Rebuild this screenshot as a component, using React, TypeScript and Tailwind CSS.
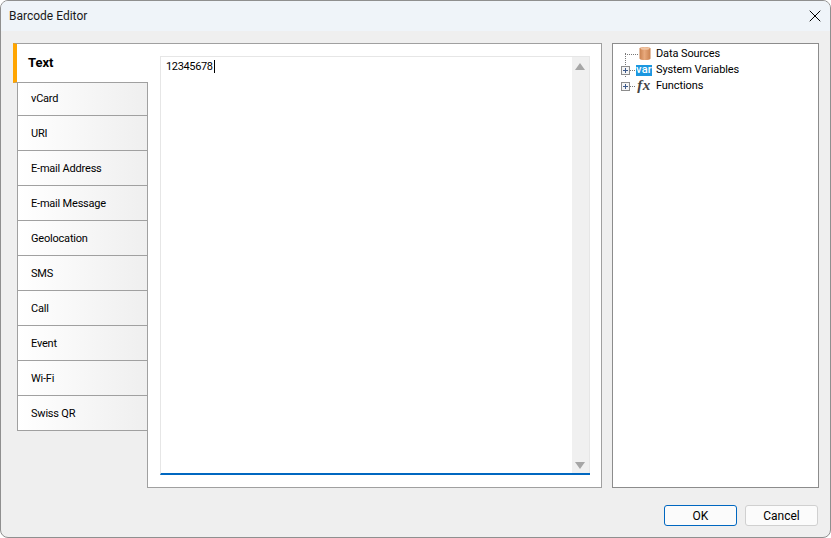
import { X } from "lucide-react";

const tabs = ["vCard", "URI", "E-mail Address", "E-mail Message", "Geolocation", "SMS", "Call", "Event", "Wi-Fi", "Swiss QR"];

function Plus() {
  return (
    <span className="flex h-[9px] w-[9px] shrink-0 items-center justify-center border border-[#8c8c8c] bg-[#f4f4f4]">
      <svg width="7" height="7" viewBox="0 0 7 7">
        <path d="M1 3.5H6M3.5 1V6" stroke="#3d5a8a" strokeWidth="1" />
      </svg>
    </span>
  );
}

export default function App() {
  return (
    <div className="flex h-[538px] w-[831px] flex-col overflow-hidden rounded-lg border border-[#8f8f8f] bg-[#efefef] text-[11px] text-black [font-family:Roboto,'Liberation_Sans',sans-serif]">
      {/* Title bar */}
      <div className="flex h-[30px] shrink-0 items-center justify-between bg-[#eff4f9] pl-[8px] pr-[5px] text-[12px]">
        <span className="text-[#1a1a1a]">Barcode Editor</span>
        <X size={20} strokeWidth={1.2} />
      </div>

      {/* Body */}
      <div className="mt-[12px] ml-[12px] flex h-[445px] w-[806px]">
        <div className="relative z-10 -mr-[1px] flex w-[135px] shrink-0 flex-col">
          <div className="flex h-[40px] items-center border-y border-l-[4px] border-[#a0a0a0] border-l-[#ffa500] bg-white pl-[11px] text-[13px] font-bold">
            Text
          </div>
          {tabs.map((t, i) => (
            <div
              key={t}
              className={`ml-[4px] mr-[1px] flex items-center border-b border-l border-[#a0a0a0] bg-gradient-to-r from-white to-[#efefef] pl-[13px] tracking-[-0.2px] ${i === 0 ? "h-[33px]" : "h-[35px] pt-[2px]"}`}
            >
              {t}
            </div>
          ))}
        </div>

        {/* Editor panel */}
        <div className="h-full w-[455px] shrink-0 border border-[#a0a0a0] bg-white pt-[12px] pl-[12px] pr-[11px] pb-[12px]">
          <div className="flex h-full border-b-2 border-l border-t border-[#e6e6e6] border-b-[#0067c0]">
            <div className="flex-1 pl-[5px] pt-[1px] leading-[17px] tracking-[-0.35px]">
              <span className="border-r border-black pr-[1px]">12345678</span>
            </div>
            <div className="flex w-[18px] shrink-0 flex-col items-center justify-between border-r border-[#e6e6e6] bg-[#f0f0f0] pt-[6px] pb-[4px] pr-[1px]">
              <span className="h-0 w-0 border-x-[5px] border-b-[7px] border-x-transparent border-b-[#a6a6a6]" />
              <span className="h-0 w-0 border-x-[5px] border-t-[7px] border-x-transparent border-t-[#a6a6a6]" />
            </div>
          </div>
        </div>

        {/* Dictionary tree */}
        <div className="ml-[10px] h-full w-[207px] shrink-0 border border-[#8c8c8c] bg-white pl-[8px] pt-[2px] tracking-[-0.1px]">
          <div className="relative flex h-[16px] items-center">
            <span className="absolute left-[4px] top-[7px] h-[24px] border-l border-dotted border-[#777]" />
            <span className="ml-[4px] w-[13px] border-t border-dotted border-[#777]" />
            <svg className="ml-[1px] -mt-[1px] shrink-0" width="12" height="15" viewBox="0 0 12 15">
              <defs>
                <linearGradient id="db" x1="0" x2="1" y1="0" y2="0">
                  <stop offset="0" stopColor="#c9814f" />
                  <stop offset="0.45" stopColor="#e8a97c" />
                  <stop offset="1" stopColor="#c9814f" />
                </linearGradient>
              </defs>
              <path d="M0.5 2.5C0.5 0.5 11.5 0.5 11.5 2.5V12.5C11.5 14.5 0.5 14.5 0.5 12.5Z" fill="url(#db)" />
              <ellipse cx="6" cy="2.5" rx="4.5" ry="1.3" fill="#f0c4a2" />
            </svg>
            <span className="ml-[5px]">Data Sources</span>
          </div>
          <div className="relative flex h-[16px] items-center">
            <Plus />
            <span className="w-[5px] border-t border-dotted border-[#777]" />
            <span className="ml-[1px] flex h-[11px] w-[16px] shrink-0 items-center justify-center bg-[#1b97e0] pb-[1px] text-[11px] font-medium leading-none tracking-[0.2px] text-white">
              var
            </span>
            <span className="ml-[4px]">System Variables</span>
          </div>
          <div className="relative flex h-[16px] items-center">
            <Plus />
            <span className="w-[5px] border-t border-dotted border-[#777]" />
            <span className="ml-[1px] -mt-[2px] flex w-[16px] shrink-0 justify-center text-[15px] font-bold italic leading-none tracking-[0.5px] text-[#444] [font-family:'Liberation_Serif',serif]">
              fx
            </span>
            <span className="ml-[4px]">Functions</span>
          </div>
        </div>
      </div>

      {/* Footer */}
      <div className="mt-[17px] ml-[663px] flex gap-[8px] text-[12px]">
        <button className="h-[21px] w-[73px] rounded-[3px] border border-[#0067c0] bg-[#fbfbfb]">OK</button>
        <button className="h-[21px] w-[73px] rounded-[3px] border border-[#d0d0d0] bg-[#fbfbfb]">Cancel</button>
      </div>
    </div>
  );
}
